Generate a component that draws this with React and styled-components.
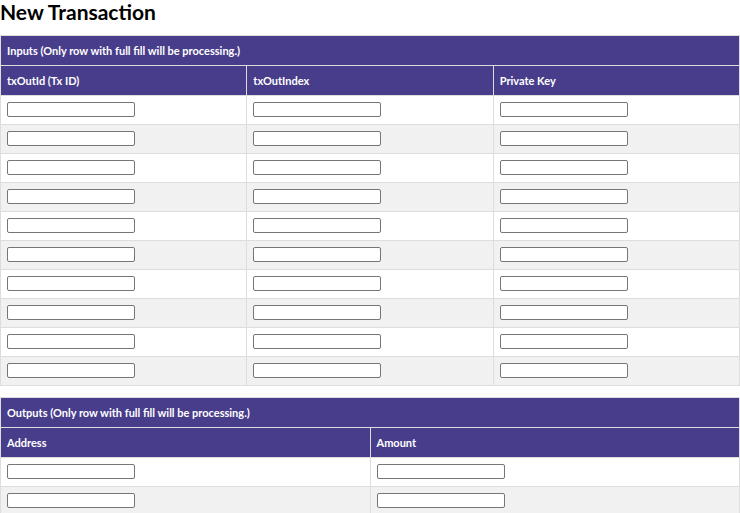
import React from "react";
import styled, { createGlobalStyle } from "styled-components";

const Global = createGlobalStyle`
  html, body { margin: 0; padding: 0; background: #fff; }
  body { font-family: Lato, "DejaVu Sans", sans-serif; color: #000; }
`;

const Page = styled.div`
  width: 740px;
`;

const Title = styled.h2`
  margin: 0 0 12px;
  height: 23px;
  font-family: Lato, sans-serif;
  font-size: 21px;
  line-height: 23px;
  font-weight: 700;
`;

const Table = styled.table`
  width: 740px;
  border-collapse: collapse;
  table-layout: fixed;
  margin-bottom: ${(p) => p.$gap || 0}px;
  font-size: 11px;
`;

const HeadCell = styled.th`
  background: #483d8b;
  color: #fff;
  font-weight: 700;
  text-align: left;
  height: 30px;
  padding: 0 6px;
  border: 1px solid #ddd;
  box-sizing: border-box;
`;

const Row = styled.tr`
  background: ${(p) => (p.$alt ? "#f1f1f1" : "#fff")};
`;

const Cell = styled.td`
  border: 1px solid #ddd;
  padding: 6px 6px 7px;
`;

const Field = styled.input`
  display: block;
  box-sizing: border-box;
  width: 128px;
  height: 15px;
  margin: 0;
  padding: 0 2px;
  border: 1px solid #767676;
  border-radius: 2px;
  background: #fff;
`;

function Grid({ title, cols, rows, gap }) {
  return (
    <Table $gap={gap}>
      <thead>
        <tr>
          <HeadCell colSpan={cols.length}>{title}</HeadCell>
        </tr>
        <tr>
          {cols.map((c) => (
            <HeadCell key={c}>{c}</HeadCell>
          ))}
        </tr>
      </thead>
      <tbody>
        {Array.from({ length: rows }).map((_, i) => (
          <Row key={i} $alt={i % 2 === 1}>
            {cols.map((c) => (
              <Cell key={c}>
                <Field type="text" />
              </Cell>
            ))}
          </Row>
        ))}
      </tbody>
    </Table>
  );
}

export default function App() {
  return (
    <Page>
      <Global />
      <Title>New Transaction</Title>
      <Grid
        title="Inputs (Only row with full fill will be processing.)"
        cols={["txOutId (Tx ID)", "txOutIndex", "Private Key"]}
        rows={10}
        gap={11}
      />
      <Grid
        title="Outputs (Only row with full fill will be processing.)"
        cols={["Address", "Amount"]}
        rows={5}
      />
    </Page>
  );
}
